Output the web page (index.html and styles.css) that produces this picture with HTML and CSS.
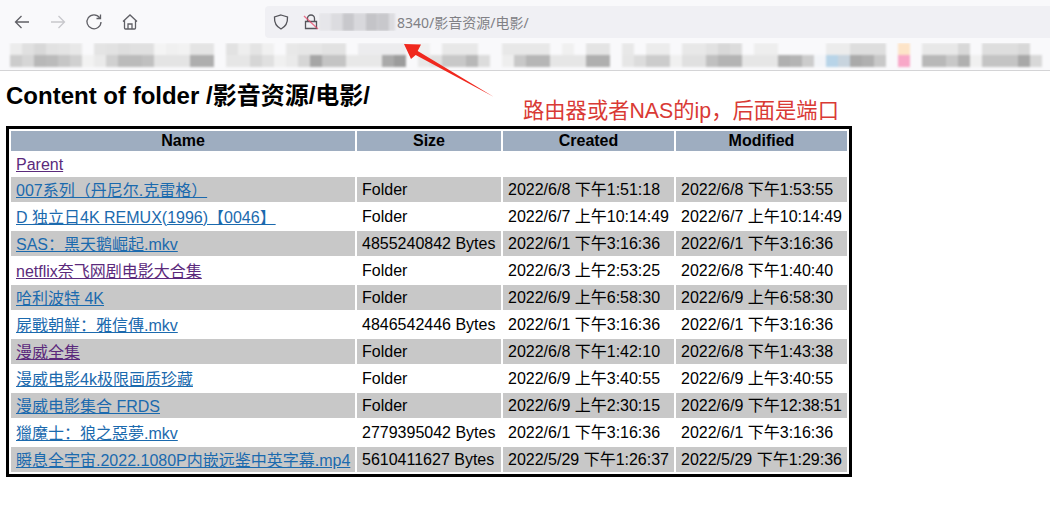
FILE: index.html
```html
<!DOCTYPE html>
<html lang="zh">
<head>
<meta charset="utf-8">
<title>Content of folder</title>
<link rel="stylesheet" href="styles.css">
</head>
<body>
<header class="chrome">
  <div class="toolbar">
    <nav class="nav">
      <svg class="nav-icon" viewBox="0 0 18 18"><path d="M16 9H2.5M8.5 3 2.5 9l6 6"/></svg>
      <svg class="nav-icon off" viewBox="0 0 18 18"><path d="M2 9h13.5M9.5 3l6 6-6 6"/></svg>
      <svg class="nav-icon" viewBox="0 0 18 18"><path d="M14.6 4.6A7 7 0 1 0 16 9M15.5 1.5v4h-4"/></svg>
      <svg class="nav-icon" viewBox="0 0 18 18"><path d="M2 8.5 9 2l7 6.500M3.500 7.500V15a1 1 0 0 0 1 1h9a1 1 0 0 0 1-1V7.500M7 16v-5h4v5"/></svg>
    </nav>
    <div class="urlbar">
      <svg class="shield" viewBox="0 0 16 16"><path d="M8 1 14.500 3c.3 5.500-1.500 9.500-6.500 12C3 12.500 1.200 8.500 1.500 3Z"/></svg>
      <svg class="lock" viewBox="0 0 16 16"><path class="lock-body" d="M4.500 7V4.500a3.500 3.500 0 0 1 7 0V7M2.500 7.500h11v7h-11Z"/><path class="lock-slash" d="M1 2l14 13"/></svg>
      <svg class="ip-mosaic" viewBox="0 0 80 18" preserveAspectRatio="none">
        <g class="soft">
          <rect x="0" width="12" height="18" fill="#e6e6ea"/><rect x="12" width="12" height="18" fill="#dcdce0"/><rect x="24" width="12" height="18" fill="#c8c8cc"/><rect x="36" width="12" height="18" fill="#d8d8dc"/><rect x="48" width="12" height="18" fill="#c4c4c8"/><rect x="60" width="12" height="18" fill="#c8c8cc"/><rect x="72" width="6" height="18" fill="#dcdce0"/>
        </g>
      </svg>
      <span class="url-text">8340/影音资源/电影/</span>
    </div>
  </div>
  <svg class="bookmarks" viewBox="0 0 1050 26" aria-hidden="true">
    <g class="soft">
      <g class="top">
        <rect x="10" width="12" height="12" fill="#ececec"/><rect x="22" width="12" height="12" fill="#e0e0e0"/><rect x="34" width="12" height="12" fill="#d8d8d8"/><rect x="46" width="12" height="12" fill="#e2e2e2"/><rect x="58" width="12" height="12" fill="#e4e4e4"/><rect x="70" width="12" height="12" fill="#e8e8e8"/><rect x="94" width="12" height="12" fill="#e4e4e4"/><rect x="106" width="12" height="12" fill="#e2e2e2"/><rect x="118" width="12" height="12" fill="#dedede"/><rect x="130" width="12" height="12" fill="#e0e0e0"/><rect x="142" width="12" height="12" fill="#e0e0e0"/><rect x="154" width="12" height="12" fill="#f4f4f4"/><rect x="166" width="12" height="12" fill="#f0f0f0"/><rect x="178" width="12" height="12" fill="#f2f2f2"/><rect x="190" width="24" height="12" fill="#e4e4e4"/>
        <rect x="226" width="12" height="12" fill="#e2e2e2"/><rect x="238" width="12" height="12" fill="#eee"/><rect x="250" width="12" height="12" fill="#e4e4e4"/><rect x="262" width="12" height="12" fill="#f0f0f0"/><rect x="286" width="12" height="12" fill="#e8e8e8"/><rect x="298" width="24" height="12" fill="#e6e6e6"/><rect x="322" width="24" height="12" fill="#e2e2e2"/><rect x="358" width="48" height="12" fill="#ececee"/><rect x="418" width="12" height="12" fill="#f0f0f0"/><rect x="442" width="36" height="12" fill="#e8e8e8"/><rect x="502" width="48" height="12" fill="#e8e8e8"/><rect x="562" width="12" height="12" fill="#f0f0f0"/><rect x="586" width="24" height="12" fill="#e4e4e4"/>
        <rect x="622" width="12" height="12" fill="#e8e8e8"/><rect x="646" width="24" height="12" fill="#ececec"/><rect x="682" width="12" height="12" fill="#e8e8e8"/><rect x="694" width="12" height="12" fill="#e8e8e8"/><rect x="706" width="12" height="12" fill="#e2e2e2"/><rect x="718" width="12" height="12" fill="#d8d8d8"/><rect x="730" width="12" height="12" fill="#dcdcdc"/><rect x="754" width="24" height="12" fill="#eee"/><rect x="826" width="24" height="12" fill="#ececec"/><rect x="850" width="36" height="12" fill="#dedede"/><rect x="898" width="12" height="12" fill="#fde4c8"/><rect x="922" width="36" height="12" fill="#e8e8e8"/><rect x="958" width="12" height="12" fill="#d8d8d8"/><rect x="982" width="36" height="12" fill="#dedede"/><rect x="1018" width="12" height="12" fill="#d8d8d8"/>
      </g>
      <g class="bottom">
        <rect x="10" y="12" width="12" height="12" fill="#ccc"/><rect x="22" y="12" width="12" height="12" fill="#d6d6d6"/><rect x="34" y="12" width="12" height="12" fill="#b8b8b8"/><rect x="46" y="12" width="12" height="12" fill="#bbb"/><rect x="58" y="12" width="12" height="12" fill="#c6c6c6"/><rect x="70" y="12" width="12" height="12" fill="#d0d0d0"/><rect x="82" y="12" width="12" height="12" fill="#f2f2f2"/><rect x="94" y="12" width="12" height="12" fill="#eaeaea"/><rect x="106" y="12" width="12" height="12" fill="#d0d0d0"/><rect x="118" y="12" width="24" height="12" fill="#bbb"/><rect x="142" y="12" width="12" height="12" fill="#c0c0c0"/><rect x="154" y="12" width="36" height="12" fill="#e4e4e4"/><rect x="190" y="12" width="24" height="12" fill="#aeaeae"/>
        <rect x="226" y="12" width="24" height="12" fill="#e6e6e6"/><rect x="250" y="12" width="12" height="12" fill="#d6d6d6"/><rect x="262" y="12" width="12" height="12" fill="#e0e0e0"/><rect x="274" y="12" width="12" height="12" fill="#f0f0f0"/><rect x="286" y="12" width="12" height="12" fill="#eaeaea"/><rect x="298" y="12" width="12" height="12" fill="#d6d6d6"/><rect x="310" y="12" width="12" height="12" fill="#a6a6a6"/><rect x="322" y="12" width="24" height="12" fill="#c4c4c4"/><rect x="346" y="12" width="36" height="12" fill="#e8e8e8"/><rect x="382" y="12" width="12" height="12" fill="#aaa"/><rect x="394" y="12" width="12" height="12" fill="#9c9c9c"/>
        <rect x="418" y="12" width="12" height="12" fill="#e8e8e8"/><rect x="430" y="12" width="12" height="12" fill="#e0e0e0"/><rect x="442" y="12" width="24" height="12" fill="#c8c8c8"/><rect x="466" y="12" width="12" height="12" fill="#b8b8b8"/><rect x="478" y="12" width="12" height="12" fill="#dcdcdc"/><rect x="502" y="12" width="12" height="12" fill="#eee"/><rect x="514" y="12" width="12" height="12" fill="#c8c8c8"/><rect x="526" y="12" width="24" height="12" fill="#b6b6b6"/><rect x="550" y="12" width="36" height="12" fill="#e6e6e6"/><rect x="586" y="12" width="24" height="12" fill="#afafaf"/>
        <rect x="622" y="12" width="12" height="12" fill="#e6e6e6"/><rect x="634" y="12" width="12" height="12" fill="#dcdcdc"/><rect x="646" y="12" width="24" height="12" fill="#cccccc"/><rect x="670" y="12" width="12" height="12" fill="#f0f0f0"/><rect x="682" y="12" width="24" height="12" fill="#e0e0e0"/><rect x="706" y="12" width="12" height="12" fill="#c0c0c0"/><rect x="718" y="12" width="24" height="12" fill="#b4b4b4"/><rect x="742" y="12" width="36" height="12" fill="#e6e6e6"/><rect x="778" y="12" width="12" height="12" fill="#b0b0b0"/><rect x="790" y="12" width="12" height="12" fill="#b4b4b4"/><rect x="802" y="12" width="12" height="12" fill="#ccc"/><rect x="814" y="12" width="12" height="12" fill="#f2f4f8"/><rect x="826" y="12" width="12" height="12" fill="#b8d4e8"/><rect x="838" y="12" width="12" height="12" fill="#c8d4de"/><rect x="850" y="12" width="12" height="12" fill="#aaa"/><rect x="862" y="12" width="12" height="12" fill="#b0b0b0"/><rect x="874" y="12" width="12" height="12" fill="#c8c8c8"/><rect x="898" y="12" width="12" height="12" fill="#f8a8c8"/><rect x="922" y="12" width="24" height="12" fill="#b8b8b8"/><rect x="946" y="12" width="12" height="12" fill="#c8c8c8"/><rect x="958" y="12" width="12" height="12" fill="#b0b0b0"/><rect x="970" y="12" width="12" height="12" fill="#f0f0f0"/><rect x="982" y="12" width="36" height="12" fill="#c4c4c4"/><rect x="1018" y="12" width="12" height="12" fill="#a8a8a8"/><rect x="1030" y="12" width="12" height="12" fill="#d8d8d8"/>
      </g>
    </g>
  </svg>
</header>

<main class="page">
  <h1 class="title">Content of folder /影音资源/电影/</h1>
  <table class="listing">
    <colgroup><col class="c-name"><col class="c-size"><col class="c-date"><col class="c-date"></colgroup>
    <thead>
      <tr><th>Name</th><th>Size</th><th>Created</th><th>Modified</th></tr>
    </thead>
    <tbody>
      <tr class="parent"><td colspan="4"><a class="visited" href="#">Parent</a></td></tr>
      <tr class="odd"><td><a href="#">007系列（丹尼尔.克雷格）</a></td><td>Folder</td><td>2022/6/8 下午1:51:18</td><td>2022/6/8 下午1:53:55</td></tr>
      <tr><td><a href="#">D 独立日4K REMUX(1996)【0046】</a></td><td>Folder</td><td>2022/6/7 上午10:14:49</td><td>2022/6/7 上午10:14:49</td></tr>
      <tr class="odd"><td><a href="#">SAS：黑天鹅崛起.mkv</a></td><td>4855240842 Bytes</td><td>2022/6/1 下午3:16:36</td><td>2022/6/1 下午3:16:36</td></tr>
      <tr><td><a class="visited" href="#">netflix奈飞网剧电影大合集</a></td><td>Folder</td><td>2022/6/3 上午2:53:25</td><td>2022/6/8 下午1:40:40</td></tr>
      <tr class="odd"><td><a href="#">哈利波特 4K</a></td><td>Folder</td><td>2022/6/9 上午6:58:30</td><td>2022/6/9 上午6:58:30</td></tr>
      <tr><td><a href="#">屍戰朝鮮：雅信傳.mkv</a></td><td>4846542446 Bytes</td><td>2022/6/1 下午3:16:36</td><td>2022/6/1 下午3:16:36</td></tr>
      <tr class="odd"><td><a class="visited" href="#">漫威全集</a></td><td>Folder</td><td>2022/6/8 下午1:42:10</td><td>2022/6/8 下午1:43:38</td></tr>
      <tr><td><a href="#">漫威电影4k极限画质珍藏</a></td><td>Folder</td><td>2022/6/9 上午3:40:55</td><td>2022/6/9 上午3:40:55</td></tr>
      <tr class="odd"><td><a href="#">漫威电影集合 FRDS</a></td><td>Folder</td><td>2022/6/9 上午2:30:15</td><td>2022/6/9 下午12:38:51</td></tr>
      <tr><td><a href="#">獵魔士：狼之惡夢.mkv</a></td><td>2779395042 Bytes</td><td>2022/6/1 下午3:16:36</td><td>2022/6/1 下午3:16:36</td></tr>
      <tr class="odd"><td><a href="#">瞬息全宇宙.2022.1080P内嵌远鉴中英字幕.mp4</a></td><td>5610411627 Bytes</td><td>2022/5/29 下午1:26:37</td><td>2022/5/29 下午1:29:36</td></tr>
    </tbody>
  </table>
</main>

<svg class="callout-arrow" viewBox="0 0 110 70" aria-hidden="true"><polygon points="9,8 26,8.500 22.700,15 99,61 20.700,19 16,23"/></svg>
<p class="callout-text">路由器或者NAS的ip，后面是端口</p>
</body>
</html>
```
FILE: styles.css
```css
* { box-sizing: border-box; }
html, body { margin: 0; padding: 0; background: #fff; }
body {
  position: relative;
  height: 511px;
  overflow: hidden;
  font-family: "Liberation Sans", "Noto Sans CJK SC", sans-serif;
  color: #000;
}

.chrome {
  height: 71px;
  background: #f9f9fb;
  border-bottom: 1px solid #d4d4d6;
}
.toolbar {
  display: flex;
  align-items: center;
  height: 43px;
}
.nav {
  display: flex;
  align-items: center;
  gap: 18px;
  width: 265px;
  padding-left: 13px;
}
.nav-icon {
  width: 18px;
  height: 18px;
  fill: none;
  stroke: #606066;
  stroke-width: 1.3;
}
.nav-icon.off { stroke: #c8c8cc; }

.urlbar {
  flex: 1;
  display: flex;
  align-items: center;
  height: 32px;
  padding-left: 8px;
  background: #f0f0f4;
  border-radius: 4px 0 0 4px;
}
.shield { width: 16px; height: 16px; fill: none; stroke: #55555b; stroke-width: 1.3; margin-right: 14px; }
.lock { width: 16px; height: 16px; fill: none; margin-right: 0; }
.lock-body { stroke: #55555b; stroke-width: 1.3; }
.lock-slash { stroke: #e8486a; stroke-width: 1.3; opacity: .75; }
.ip-mosaic { width: 78px; height: 18px; }
.url-text {
  font-family: "Noto Sans", "Noto Sans CJK SC", sans-serif;
  font-size: 14px;
  color: #808085;
}

.bookmarks { display: block; width: 1050px; height: 26px; }
.soft { filter: blur(1px); }

.page { padding: 0 6px; }
.title {
  margin: 11px 0 16px;
  font-size: 24px;
  line-height: 28px;
  font-weight: 700;
}

.listing {
  width: 846px;
  table-layout: fixed;
  border: 3px solid #000;
  border-spacing: 2px;
  border-collapse: separate;
  font-size: 16px;
  line-height: 20px;
}
.c-name { width: 344px; }
.c-size { width: 144px; }
.c-date { width: 171px; }

.listing th {
  height: 20px;
  padding: 0 5px;
  background: #9eadc0;
  font-weight: 700;
  text-align: center;
  white-space: nowrap;
}
.listing td {
  height: 25px;
  padding: 0 0 0 5px;
  white-space: nowrap;
}
.listing td:first-child { padding-top: 2px; }
.listing .parent td { height: 22px; }
.listing .odd td { background: #c8c8c8; }
.listing a { color: #1b6aae; text-decoration: underline; }
.listing a.visited { color: #5b2a7c; }

.callout-arrow {
  position: absolute;
  left: 395px;
  top: 36px;
  width: 110px;
  height: 70px;
  fill: #f0281e;
}
.callout-text {
  position: absolute;
  left: 523px;
  top: 97px;
  margin: 0;
  font-size: 21.3px;
  line-height: 28px;
  color: #d93a35;
  white-space: nowrap;
}
```
